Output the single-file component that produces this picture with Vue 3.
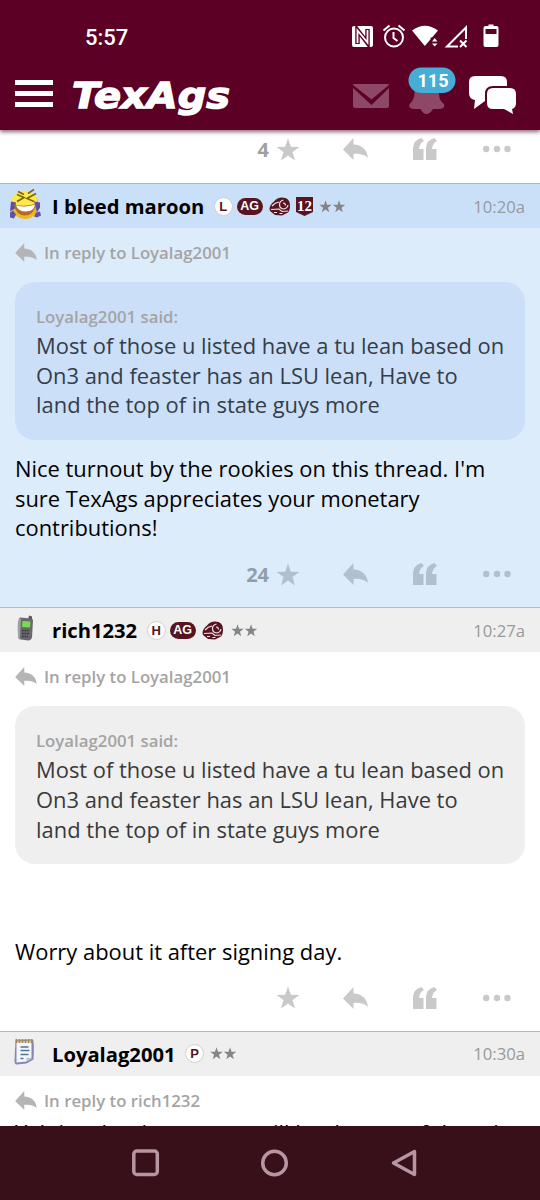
<script setup>
const STAR = 'M12 .6l2.8 8.2 8.7.1-7 5.2 2.5 8.4-7-5-7 5 2.5-8.4-7-5.2 8.700-.1z'
const REPLY = 'M0 11.5L10.5 0v6.4C19 6.8 24 11.5 25 19.8 20.5 16.400 16.500 15.500 10.500 16v6z'
const quoteLines = ['Most of those u listed have a tu lean based on', 'On3 and feaster has an LSU lean, Have to', 'land the top of in state guys more']
const posts = [
  {
    name: 'I bleed maroon', avatar: 'laugh', badge: 'L', tags: ['ag', 'helmet', 'twelve'], time: '10:20a',
    replyTo: 'Loyalag2001', quote: true, blue: true, count: '24',
    lines: ["Nice turnout by the rookies on this thread. I'm", 'sure TexAgs appreciates your monetary', 'contributions!'],
  },
  {
    name: 'rich1232', avatar: 'phone', badge: 'H', tags: ['ag', 'helmet'], time: '10:27a',
    replyTo: 'Loyalag2001', quote: true, gap: true, count: '',
    lines: ['Worry about it after signing day.'],
  },
  {
    name: 'Loyalag2001', avatar: 'note', badge: 'P', tags: [], time: '10:30a',
    replyTo: 'rich1232', last: true,
    lines: ['Yah just hoping we can still land some of them in'],
  },
]
</script>

<template>
  <div class="screen">
    <header class="top">
      <div class="status">
        <span class="clock">5:57</span>
        <svg class="sysicons" width="150" height="26" viewBox="350 23 150 26" fill="#fff">
          <rect x="352" y="26" width="21" height="21" rx="2" />
          <path d="M357.500 44V30L367.500 43V29" fill="none" stroke="#5c0025" stroke-width="4.500" />
          <path d="M357.500 43V30.500L367.500 42.500V30" fill="none" stroke="#fff" stroke-width="1.800" />
          <g fill="none" stroke="#fff" stroke-width="2">
            <circle cx="394" cy="37.500" r="9" />
            <path d="M393.500 32v6l4 3M383.500 30.500l6-5M398.500 25.500l6 5" />
          </g>
          <path d="M412 30.500Q425 21 438 30.500L424.800 46z" />
          <path d="M430.500 37.500h8v10h-6z" fill="#5c0025" />
          <path d="M432 41.500l2.700-3.500 2.700 3.500zM432 43.500l2.700 3 2.700-3z" />
          <path d="M466 39V27.500L447 46.500h11" fill="none" stroke="#fff" stroke-width="2" />
          <path d="M460 40.500l6.500 6.500m0-6.500l-6.500 6.500" stroke="#fff" stroke-width="2" />
          <path d="M485.500 26h3v-1.500h5V26h3q2 0 2 2v17q0 2-2 2h-11q-2 0-2-2V28q0-2 2-2z" />
          <rect x="485.500" y="29" width="11" height="5" fill="#5c0025" />
        </svg>
      </div>
      <div class="nav">
        <div class="burger"><i></i><i></i><i></i></div>
        <svg class="logo" width="166" height="44" viewBox="70 76 166 44">
          <text x="72" y="107.500" textLength="158" lengthAdjust="spacingAndGlyphs">TexAgs</text>
        </svg>
        <svg class="navicons" width="170" height="56" viewBox="350 64 170 56">
          <path d="M353 88l18.500 17L389 88v18q0 2-2 2H355q-2 0-2-2z" fill="#8d4767" />
          <path d="M354 84h34q1 0 1 1l-17.500 14.500L353 85q0-1 1-1z" fill="#8d4767" />
          <path d="M414 84q0-8 12-8t13 8v9q0 8 5 11 2 5-6 5h-5q-3 5-6.500 5t-6-5h-5q-8 0-6-5 5-4 5-11z" fill="#8d4767" />
          <rect x="408.500" y="67.500" width="47" height="25.500" rx="12.750" fill="#46add5" />
          <text class="count-badge" x="417.500" y="86.500" textLength="31">115</text>
          <path d="M475 76h26q6 0 6 6v4h-14q-8 0-8 8v7l-11 8 1-9q-6-1-6-7V82q0-6 6-6z" fill="#fff" />
          <path d="M493 88h17q6 0 6 6v9q0 5-4 6l1 5-9-5h-11q-6 0-6-6v-9q0-6 6-6z" fill="#fff" />
        </svg>
      </div>
    </header>

    <main class="feed">
      <div class="actions first">
        <span class="likes">4</span>
        <svg class="star" viewBox="0 0 24 23"><path :d="STAR" /></svg>
        <svg class="rep" viewBox="0 0 25 22"><path :d="REPLY" /></svg>
        <svg class="quo" viewBox="0 0 24 22"><path d="M0 22V11Q0 2 8.500 0L11 3Q6.500 5 6 11h4.500v11zM13 22V11Q13 2 21.500 0L24 3Q19.500 5 19 11h4.500v11z" /></svg>
        <svg class="dots" viewBox="0 0 28 8"><circle cx="3.200" cy="4" r="3.200" /><circle cx="14" cy="4" r="3.200" /><circle cx="24.500" cy="4" r="3.200" /></svg>
      </div>

      <article v-for="p in posts" :key="p.name" class="post" :class="{ blue: p.blue }">
        <div class="post-head">
          <svg class="avatar" width="36" height="36" viewBox="0 0 36 36">
            <g v-if="p.avatar === 'laugh'" transform="translate(0 -1.500)">
              <ellipse cx="17" cy="18.500" rx="13.500" ry="14" fill="#efb81f" />
              <ellipse cx="16.500" cy="14" rx="12.500" ry="10" fill="#ffe84a" />
              <path d="M3 15l5 1-1 6-5 3zM26 15l6 1v5l-3 5z" fill="#5f4f9e" />
              <path d="M9 8l7 3-7 4M28 7l-9 5 7 3M10 5l6 3M20 7l6-4" fill="none" stroke="#79651b" stroke-width="1.700" />
              <path d="M6 18q11 3 22-1-2 12-11 12T6 18z" fill="#b56a25" />
              <path d="M8 19q10 2.500 19-1-1 7-9 7T8 19z" fill="#fff" />
              <path d="M2 26l3-2 3 4-2 4-4-1zM28 26l4-1 1 4-4 2-3-1z" fill="#6252a4" />
            </g>
            <g v-else-if="p.avatar === 'phone'" transform="translate(0 1.500)">
              <path d="M20 7l1-5 3 1v6z" fill="#555" />
              <path d="M12 4l11 1q2 0 2 2l-1 17q-1 3-4 3l-7-1q-3 0-3-4l1-15q0-3 1-3z" fill="#69696d" />
              <path d="M11 5q-2 3-1 18l2 3L13 5z" fill="#a0a0a4" />
              <path d="M14.500 7.500l8 .5-.5 6-8-.5z" fill="#78db50" />
              <path d="M14 17h7M14 20h7M14 23h6" stroke="#38383b" stroke-width="1.600" stroke-dasharray="1.700 .8" />
            </g>
            <g v-else transform="translate(.5 .500)">
              <path d="M7 4l17-1q2 0 1 20l-7 4-10 1q-2 0-2-4z" fill="#8387b7" />
              <path d="M8 5l15-1v17l-5 4-10 1z" fill="#f3f6fa" />
              <path d="M7 4.500h17" stroke="#a88a50" stroke-width="4" stroke-dasharray="2 1" />
              <path d="M12 10.500h8M12 14h9M12 18h8M12 22h3" stroke="#557596" stroke-width="1.400" />
              <path d="M18 25v-4l6 1z" fill="#b9bfd2" />
            </g>
          </svg>
          <span class="name">{{ p.name }}</span>
          <span class="letter">{{ p.badge }}</span>
          <template v-for="t in p.tags" :key="t">
            <span v-if="t === 'ag'" class="ag">AG</span>
            <svg v-else-if="t === 'helmet'" class="helmet" width="21" height="19" viewBox="0 0 21 19">
              <path d="M.5 12Q1 7 5 4.500 8 .5 13 .5q8 0 8 8 0 5-2 7L13 18.500 6 18 1 14z" fill="#561520" />
              <path d="M3 9q3-3.500 7-4M14.500 3q-4 1-4 4.500 0 4 4 4.500 4-.5 4.500-4M14 6q2.500 0 2.500 2.500M2 12.500l8-.5 3 2.500 6-.5M5 15.500h3M10.500 16.500h3" fill="none" stroke="#f3e4e9" stroke-width="1.200" />
            </svg>
            <svg v-else class="twelve" width="17" height="20" viewBox="0 0 17 20">
              <path d="M0 1h17v15l-8.500 4L0 16z" fill="#561520" />
              <text x="1" y="14.500">12</text>
            </svg>
          </template>
          <svg class="rank" :class="{ pad: p.tags.length === 2 }" width="27" height="13" viewBox="0 0 49.800 24">
            <path :d="STAR" /><path :d="STAR" transform="translate(25 0)" />
          </svg>
          <span class="time">{{ p.time }}</span>
        </div>
        <div class="inreply">
          <svg width="22" height="19" viewBox="0 0 25 22"><path :d="REPLY" /></svg>
          <span>In reply to {{ p.replyTo }}</span>
        </div>
        <blockquote v-if="p.quote" class="quote">
          <div class="said">Loyalag2001 said:</div>
          <div v-for="l in quoteLines" :key="l" class="line">{{ l }}</div>
        </blockquote>
        <div class="body" :class="{ gap: p.gap, last: p.last }">
          <div v-for="l in p.lines" :key="l" class="line">{{ l }}</div>
        </div>
        <div v-if="!p.last" class="actions">
          <span class="likes">{{ p.count }}</span>
          <svg class="star" viewBox="0 0 24 23"><path :d="STAR" /></svg>
          <svg class="rep" viewBox="0 0 25 22"><path :d="REPLY" /></svg>
          <svg class="quo" viewBox="0 0 24 22"><path d="M0 22V11Q0 2 8.500 0L11 3Q6.500 5 6 11h4.500v11zM13 22V11Q13 2 21.500 0L24 3Q19.500 5 19 11h4.500v11z" /></svg>
          <svg class="dots" viewBox="0 0 28 8"><circle cx="3.200" cy="4" r="3.200" /><circle cx="14" cy="4" r="3.200" /><circle cx="24.500" cy="4" r="3.200" /></svg>
        </div>
      </article>
    </main>

    <footer class="sysnav">
      <svg width="290" height="30" viewBox="130 1148 290 30" fill="none" stroke="#b596a2" stroke-width="3.500" stroke-linejoin="round">
        <rect x="133.800" y="1151" width="23.500" height="23.500" rx="3" />
        <circle cx="274.500" cy="1163" r="11.800" />
        <path d="M414.500 1151.500v23L393.500 1163z" />
      </svg>
    </footer>
  </div>
</template>

<style>
body { margin: 0; background: #fff; }
</style>

<style scoped>
.screen { width: 540px; height: 1200px; display: flex; flex-direction: column; overflow: hidden; background: #fff; font-family: "Open Sans", "Noto Sans", sans-serif; color: #000; }
.top { height: 130px; flex: none; background: #5c0025; box-shadow: 0 2px 4px rgba(70, 0, 30, .6); position: relative; z-index: 1; }
.status { height: 60px; display: flex; justify-content: space-between; padding: 0 40px 0 85px; }
.clock { font: 500 22px/75px Roboto, sans-serif; color: #fff; }
.sysicons { margin-top: 23px; }
.nav { height: 70px; display: flex; padding: 0 20px 0 15px; }
.burger { width: 38px; display: flex; flex-direction: column; gap: 6px; margin: 20px 17px 0 0; }
.burger i { height: 5px; background: #fff; }
.logo { margin-top: 16px; overflow: visible; }
.logo text { font: italic bold 36px "DejaVu Sans", sans-serif; fill: #fff; stroke: #fff; stroke-width: 1.400px; }
.navicons { margin: 4px 0 0 auto; }
.count-badge { font: bold 18px Roboto, sans-serif; fill: #fff; }
.feed { flex: 1; min-height: 0; overflow: hidden; }
.actions { height: 64px; box-sizing: border-box; padding-bottom: 2px; display: flex; align-items: center; fill: #c9c9c9; }
.actions.first { height: 53px; padding-bottom: 15px; }
.likes { width: 269px; text-align: right; font-weight: bold; font-size: 20px; color: #a0a0a0; }
.star { width: 24px; height: 23px; margin-left: 7px; }
.rep { width: 25px; height: 22px; margin-left: 43px; }
.quo { width: 24px; height: 22px; margin-left: 45px; }
.dots { width: 28px; height: 8px; margin-left: 46px; }
.post { border-top: 1px solid #b9b9b9; }
.post-head { height: 44px; display: flex; align-items: center; background: #efefef; padding: 0 15px 0 8px; }
.avatar { margin-right: 8px; flex: none; }
.name { font-weight: 700; font-size: 20.200px; white-space: nowrap; }
.letter { width: 17px; height: 17px; border: 1px solid #d0d0d0; border-radius: 50%; background: #fff; color: #561520; text-align: center; font: bold 13px/17px "Liberation Sans", sans-serif; margin-left: 9.500px; flex: none; }
.ag { width: 26px; height: 17px; border-radius: 9px; background: #561520; color: #fff; font: bold 12.500px/17px "Liberation Sans", sans-serif; text-align: center; margin-left: 4px; }
.helmet { margin-left: 6px; }
.twelve { margin-left: 6px; }
.twelve text { font: bold 15px "Liberation Serif", serif; fill: #fff; }
.rank { margin-left: 6px; fill: #858585; }
.rank.pad { margin-left: 8px; }
.time { margin-left: auto; font-size: 16.700px; color: #999; }
.inreply { height: 49px; display: flex; align-items: center; padding-left: 15px; gap: 7px; font-size: 16.800px; font-weight: 600; color: #a4a4a4; fill: #b5b5b5; }
.quote { margin: 5px 15px 0; height: 158px; box-sizing: border-box; padding: 22px 0 0 21px; border-radius: 20px; background: #efefef; color: #3a3a3a; }
.said { font-size: 16.800px; font-weight: 600; line-height: 26px; color: #a4a4a4; }
.line { font-size: 21.920px; line-height: 29.700px; white-space: nowrap; }
.said + .line { margin-top: 1px; }
.body { padding: 14px 0 0 15px; }
.body.gap { padding-top: 73px; }
.body.last { padding-top: 0; margin-top: -7px; }
.blue { background: #ddecfb; border-color: #a9b8c8; }
.blue .post-head { background: #cae0f9; }
.blue .quote { background: #cbe0f8; color: #343d48; }
.blue .actions { fill: #b0c0cf; }
.blue .likes { color: #8f9eab; }
.sysnav { height: 74px; flex: none; background: #371019; display: flex; padding: 22px 0 0 130px; box-sizing: border-box; }
</style>
